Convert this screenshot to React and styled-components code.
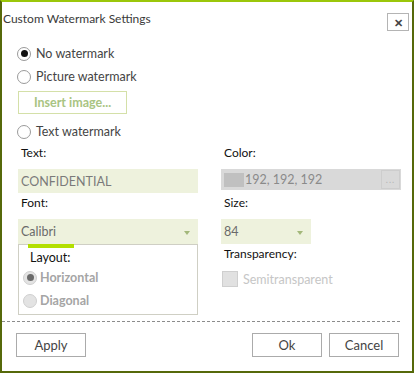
import styled, { createGlobalStyle } from "styled-components";

const GlobalStyle = createGlobalStyle`
  body {
    margin: 0;
    background: #ffffff;
    font-family: Lato, "Open Sans", sans-serif;
  }
`;

const Window = styled.div`
  width: 414px;
  height: 373px;
  box-sizing: border-box;
  border: 2px solid #56690a;
  border-top: 2px solid #9bc70a;
  background: #ffffff;
  display: flex;
  flex-direction: column;
`;

const TitleBar = styled.div`
  display: flex;
  justify-content: space-between;
  height: 40px;
  padding-left: 1px;
  padding-right: 3px;
`;

const Title = styled.div`
  font-size: 12px;
  color: #3a3a3a;
  margin-top: 9px;
`;

const CloseButton = styled.div`
  width: 20px;
  height: 16px;
  margin-top: 11px;
  border: 1px solid #b4b4b4;
  display: flex;
  align-items: center;
  justify-content: center;
  color: #444;
  font-size: 11px;
  font-weight: 700;
  line-height: 1;
`;

const Body = styled.div`
  padding: 0 12px 0 15px;
`;

const RadioRow = styled.label`
  display: flex;
  align-items: center;
  gap: ${(p) => (p.$disabled ? 3 : 5)}px;
  height: 23px;
  font-size: 12.5px;
  color: ${(p) => (p.$disabled ? "#a5a5a5" : "#444")};
  font-weight: ${(p) => (p.$disabled ? 700 : 400)};
`;

const RadioCircle = styled.span`
  width: 14px;
  height: 14px;
  box-sizing: border-box;
  border-radius: 50%;
  border: 1px solid ${(p) => (p.$disabled ? "#cfcfcf" : "#9a9a9a")};
  background: ${(p) => (p.$disabled ? "#e3e3e3" : "#fff")};
  display: flex;
  align-items: center;
  justify-content: center;
  flex-shrink: 0;

  &::after {
    content: "";
    display: ${(p) => (p.$checked ? "block" : "none")};
    width: 7px;
    height: 7px;
    border-radius: 50%;
    background: ${(p) => (p.$disabled ? "#6a6a6a" : "#111")};
  }
`;

const InsertButton = styled.div`
  width: 109px;
  height: 23px;
  box-sizing: border-box;
  margin: 3px 0 6px 1px;
  border: 1px solid #d4e0a8;
  display: flex;
  align-items: center;
  justify-content: center;
  color: #a9c482;
  font-size: 12.5px;
  font-weight: 700;
`;

const Grid = styled.div`
  display: grid;
  grid-template-columns: 180px 180px;
  column-gap: 23px;
  margin-left: 1px;
`;

const Column = styled.div`
  display: flex;
  flex-direction: column;
`;

const FieldLabel = styled.div`
  height: 20px;
  line-height: 20px;
  font-size: 12px;
  color: #111;
  padding-left: 3px;
  margin-top: ${(p) => p.$top || 0}px;
  margin-bottom: 6px;
`;

const TextInput = styled.div`
  height: 24px;
  background: #eef2dd;
  display: flex;
  align-items: center;
  padding-left: 3px;
  font-size: 12.5px;
  color: #7a7a7a;
`;

const Dropdown = styled.div`
  width: ${(p) => p.$width || 180}px;
  height: 25px;
  box-sizing: border-box;
  background: #eef2dd;
  display: flex;
  align-items: center;
  justify-content: space-between;
  padding: 0 8px 0 3px;
  font-size: 12.5px;
  color: #6a6a6a;
`;

const Arrow = styled.span`
  width: 0;
  height: 0;
  border-left: 3px solid transparent;
  border-right: 3px solid transparent;
  border-top: 4px solid #a3b87a;
  margin-top: 2px;
`;

const ColorField = styled.div`
  height: 21px;
  background: #d9d9d9;
  display: flex;
  align-items: center;
  padding: 0 1px 0 3px;
  font-size: 12.5px;
  color: #8a8a8a;
`;

const Swatch = styled.span`
  width: 20px;
  height: 14px;
  background: #c0c0c0;
  margin-right: 1px;
`;

const Ellipsis = styled.span`
  margin-left: auto;
  width: 19px;
  height: 19px;
  box-sizing: border-box;
  border: 1px solid #cdcdcd;
  color: #b5b5b5;
  font-size: 9px;
  display: flex;
  align-items: center;
  justify-content: center;
  letter-spacing: 1px;
`;

const GroupBox = styled.div`
  position: relative;
  height: 71px;
  box-sizing: border-box;
  border: 1px solid #cfcfc4;
  padding: 3px 0 0 4px;
`;

const GroupAccent = styled.span`
  position: absolute;
  top: -1px;
  left: 9px;
  width: 46px;
  height: 4px;
  background: #b3df00;
`;

const GroupLabel = styled.div`
  font-size: 12.5px;
  color: #111;
  padding-left: 7px;
  height: 18px;
  line-height: 20px;
`;

const CheckRow = styled.div`
  display: flex;
  align-items: center;
  gap: 5px;
  height: 16px;
  padding-left: 1px;
  margin-top: 1px;
  font-size: 12.5px;
  font-weight: 400;
  color: #c6c6c6;
`;

const CheckBox = styled.span`
  width: 16px;
  height: 16px;
  box-sizing: border-box;
  border: 1px solid #cfcfcf;
  background: #e1e1e1;
`;

const Divider = styled.div`
  margin: 6px 12px 0 0;
  border-top: 1px dashed #8c8c8c;
`;

const Footer = styled.div`
  display: flex;
  align-items: center;
  padding: 11px 13px 0 14px;
  gap: 7px;
`;

const Button = styled.div`
  width: 70px;
  height: 24px;
  box-sizing: border-box;
  border: 1px solid #ababab;
  display: flex;
  align-items: center;
  justify-content: center;
  font-size: 13px;
  color: #444;
  margin-left: ${(p) => (p.$push ? "auto" : "0")};
`;

export default function App() {
  return (
    <>
      <GlobalStyle />
      <Window>
        <TitleBar>
          <Title>Custom Watermark Settings</Title>
          <CloseButton>✕</CloseButton>
        </TitleBar>
        <Body>
          <RadioRow>
            <RadioCircle $checked />
            No watermark
          </RadioRow>
          <RadioRow>
            <RadioCircle />
            Picture watermark
          </RadioRow>
          <InsertButton>Insert image...</InsertButton>
          <RadioRow>
            <RadioCircle />
            Text watermark
          </RadioRow>
          <Grid>
            <Column>
              <FieldLabel>Text:</FieldLabel>
              <TextInput>CONFIDENTIAL</TextInput>
              <FieldLabel>Font:</FieldLabel>
              <Dropdown>
                Calibri
                <Arrow />
              </Dropdown>
              <GroupBox>
                <GroupAccent />
                <GroupLabel>Layout:</GroupLabel>
                <RadioRow $disabled>
                  <RadioCircle $disabled $checked />
                  Horizontal
                </RadioRow>
                <RadioRow $disabled>
                  <RadioCircle $disabled />
                  Diagonal
                </RadioRow>
              </GroupBox>
            </Column>
            <Column>
              <FieldLabel>Color:</FieldLabel>
              <ColorField>
                <Swatch />
                192, 192, 192
                <Ellipsis>...</Ellipsis>
              </ColorField>
              <FieldLabel $top={3}>Size:</FieldLabel>
              <Dropdown $width={90}>
                84
                <Arrow />
              </Dropdown>
              <FieldLabel>Transparency:</FieldLabel>
              <CheckRow>
                <CheckBox />
                Semitransparent
              </CheckRow>
            </Column>
          </Grid>
        </Body>
        <Divider />
        <Footer>
          <Button>Apply</Button>
          <Button $push>Ok</Button>
          <Button>Cancel</Button>
        </Footer>
      </Window>
    </>
  );
}
